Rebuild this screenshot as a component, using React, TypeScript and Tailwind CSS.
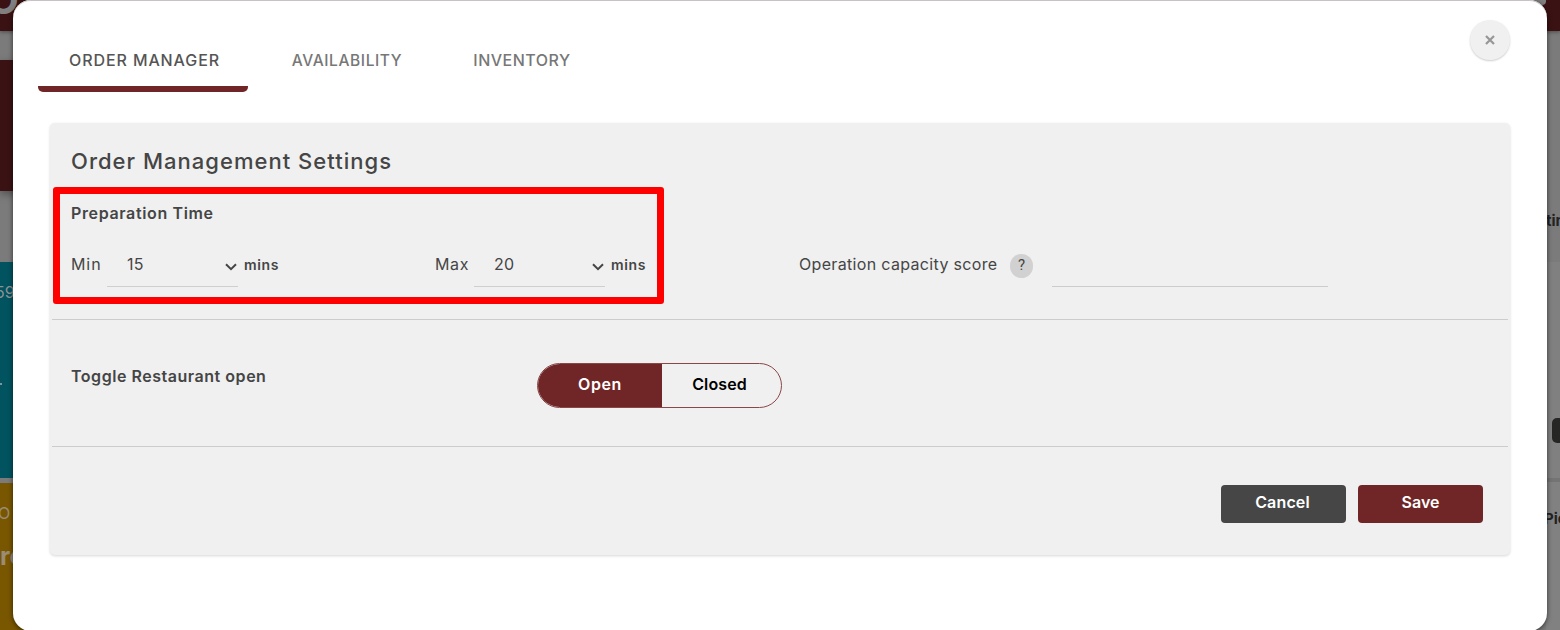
import { useState } from "react";

const TABS = [
  { label: "ORDER MANAGER", box: "w-[210px]", text: "mt-[13px] mb-[14px] pl-[3px] text-[16px] tracking-[0.9px] text-[#555555]" },
  { label: "AVAILABILITY", box: "w-[197px]", text: "mt-[14px] mb-[13px] pl-[1px] text-[15.5px] tracking-[0.6px] text-[#777777]" },
  { label: "INVENTORY", box: "w-[153px]", text: "mt-[13px] mb-[14px] pl-[1px] text-[16px] tracking-[0.5px] text-[#777777]" },
];

function Chevron() {
  return (
    <svg viewBox="0 0 12 8" className="h-2 w-3" fill="none" stroke="#454545" strokeWidth="2">
      <path d="M1 1.2 6 6.2 11 1.2" />
    </svg>
  );
}

function TimeField({ label, value, gap }: { label: string; value: string; gap: string }) {
  return (
    <div className="flex w-[364px] items-start text-[16px] leading-[24px]">
      <span className={`h-6 ${gap}`}>{label}</span>
      <div className="flex h-[35px] w-[131px] items-start border-b border-[#cfcfcf] pl-5">
        <span className="w-[98px] tracking-[0.3px]">{value}</span>
        <span className="mt-[11px]">
          <Chevron />
        </span>
      </div>
      <span className="ml-[6px] text-[14px] leading-[25px] font-semibold tracking-[0.6px]">mins</span>
    </div>
  );
}

// Dimmed dashboard that shows around the edges of the dialog.
function Dashboard() {
  return (
    <div className="flex h-full flex-col bg-[#7b7b7b] whitespace-nowrap">
      <div className="flex h-[31px] shrink-0 justify-between overflow-hidden bg-[#3a1213] shadow-[0_1px_4px_rgba(0,0,0,0.4)]">
        <span className="-mt-[24px] -ml-[12px] text-[40px] leading-[48px] font-bold text-[#808080]">O</span>
        <span className="mt-[-3px] mr-[14px] h-2 w-8 rounded-full bg-[#808080]" />
      </div>
      <div className="flex flex-1 justify-between">
        <div className="flex w-[60px] flex-col overflow-hidden pt-[29px] text-[#8c9294]">
          <div className="h-[131px] shrink-0 bg-[#3a1213] shadow-[0_3px_8px_rgba(0,0,0,0.35)]" />
          <div className="mt-[71px] h-[216px] shrink-0 bg-[#00535f] pt-[18px]">
            <div className="-ml-[5px] text-[16px] leading-6">59</div>
            <div className="mt-[79px] h-[2px] w-[2px] bg-[#8c9294]" />
          </div>
          <div className="mt-[5px] h-[147px] shrink-0 bg-[#795600] pt-[18px] text-[#9a8c75]">
            <div className="-ml-[2px] text-[16px] leading-6">O</div>
            <div className="mt-[16px] text-[25px] leading-[30px] font-bold">ro</div>
          </div>
        </div>
        <div className="flex w-[14px] flex-col overflow-hidden text-[15px] font-bold text-[#222222]">
          <div className="h-[231px] shrink-0 pt-[178px] leading-6">tin</div>
          <div className="h-[216px] shrink-0 bg-[#808080] pt-[156px] pl-[6px]">
            <div className="h-[25px] w-10 rounded-[5px] bg-[#262624]" />
          </div>
          <div className="h-[152px] shrink-0 border-t-4 border-[#747474] bg-[#818181] pt-[25px] leading-6">
            <span className="-ml-[2px]">Pick</span>
          </div>
        </div>
      </div>
    </div>
  );
}

export default function App() {
  const [tab, setTab] = useState(0);
  const [open, setOpen] = useState(true);

  return (
    <div className="relative h-[630px] w-[1560px] overflow-hidden font-[Inter,sans-serif] text-[#454545]">
      <Dashboard />

      <div
        role="dialog"
        className="absolute top-0 left-[13px] h-[631px] w-[1534px] rounded-[18px] bg-white px-[25px] whitespace-nowrap shadow-[inset_0_1px_0_#c9c2c4,0_1px_5px_rgba(0,0,0,0.6)]"
      >
        <div className="flex justify-between">
          <div className="flex pt-[35px]">
            {TABS.map((t, i) => (
              <button
                key={t.label}
                type="button"
                onClick={() => setTab(i)}
                className={`flex h-[57px] flex-col items-center ${t.box}`}
              >
                <span className={`leading-6 font-medium ${t.text}`}>{t.label}</span>
                {tab === i && <span className="h-[6px] w-full rounded-b-[5px] bg-[#702626]" />}
              </button>
            ))}
          </div>
          <button
            type="button"
            aria-label="Close"
            className="mt-5 mr-3 flex h-10 w-10 items-center justify-center rounded-full bg-[#f0f0f0] shadow-[0_1px_2px_rgba(0,0,0,0.2)]"
          >
            <svg viewBox="0 0 10 10" className="h-[10px] w-[10px]" stroke="#969696" strokeWidth="2.2">
              <path d="M1 1 9 9M9 1 1 9" />
            </svg>
          </button>
        </div>

        <div className="relative mx-3 mt-[31px] h-[432px] rounded-[5px] bg-[#f0f0f0] px-[2px] shadow-[0_1px_3px_rgba(0,0,0,0.16)]">
          <section className="h-[197px] border-b border-[#cccccc] px-[19px] pt-[24px]">
            <h2 className="text-[22px] leading-[28px] font-medium tracking-[1.02px]">Order Management Settings</h2>
            <h3 className="mt-[26px] text-[16px] leading-6 font-semibold tracking-[0.63px]">Preparation Time</h3>
            <div className="mt-[27px] flex">
              <TimeField label="Min" value="15" gap="w-[36px] tracking-[0.9px]" />
              <TimeField label="Max" value="20" gap="w-[39px] tracking-[0.6px]" />
              <div className="flex text-[16px] leading-6">
                <span className="w-[211px] tracking-[0.33px]">Operation capacity score</span>
                <span className="mt-[2px] flex h-6 w-[23px] items-center justify-center rounded-full bg-[#d1d1d1] pb-[2px] font-[Roboto,sans-serif] text-[15px]">
                  ?
                </span>
                <span className="ml-[19px] h-[35px] w-[276px] border-b border-[#cccccc]" />
              </div>
            </div>
          </section>

          <section className="flex h-[127px] border-b border-[#cccccc] px-[19px]">
            <h3 className="mt-[44px] w-[466px] text-[16px] leading-6 font-semibold tracking-[0.53px]">
              Toggle Restaurant open
            </h3>
            <div className="mt-[43px] flex h-[45px] w-[245px] overflow-hidden rounded-full border border-[#8a4747] text-[16px] leading-[40px] font-semibold">
              <button
                type="button"
                onClick={() => setOpen(true)}
                className={`h-full w-[124px] pb-[3px] tracking-[0.6px] ${open ? "bg-[#702626] text-white" : "text-black"}`}
              >
                Open
              </button>
              <button
                type="button"
                onClick={() => setOpen(false)}
                className={`h-full flex-1 pr-[4px] pb-[3px] tracking-[0.1px] ${open ? "text-black" : "bg-[#702626] text-white"}`}
              >
                Closed
              </button>
            </div>
          </section>

          <section className="flex justify-end gap-3 pt-[38px] pr-[25px] text-[16px] leading-[35px] font-semibold text-white">
            <button type="button" className="h-[38px] w-[125px] rounded-[4px] bg-[#464646] pr-[2px] pb-[3px] tracking-[0.15px]">
              Cancel
            </button>
            <button type="button" className="h-[38px] w-[125px] rounded-[4px] bg-[#702626] pb-[3px]">
              Save
            </button>
          </section>

          {/* highlight around the preparation time fields */}
          <div className="pointer-events-none absolute top-[64px] left-[3px] h-[117px] w-[611px] rounded-[3px] border-[7.5px] border-[#ff0000]" />
        </div>
      </div>
    </div>
  );
}
